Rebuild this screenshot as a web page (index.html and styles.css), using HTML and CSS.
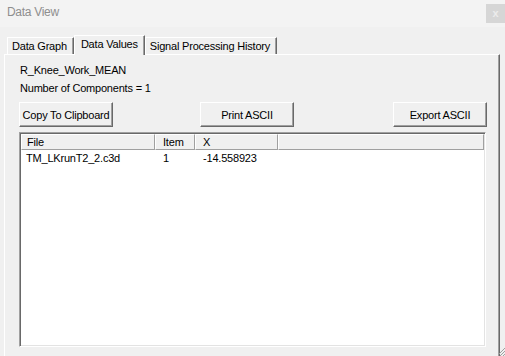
FILE: index.html
```html
<!DOCTYPE html>
<html lang="en">
<head>
  <meta charset="UTF-8" />
  <title>Data View</title>
  <link rel="stylesheet" href="styles.css">
</head>
<body>
  <div class="window">
    <div class="titlebar">
      <span class="title">Data View</span>
      <span class="close">x</span>
    </div>

    <div class="tabs">
      <div class="tab">Data Graph</div>
      <div class="tab active">Data Values</div>
      <div class="tab">Signal Processing History</div>
    </div>

    <div class="panel">
      <div class="label">R_Knee_Work_MEAN</div>
      <div class="label">Number of Components = 1</div>

      <div class="buttons">
        <button class="btn">Copy To Clipboard</button>
        <button class="btn btn-print">Print ASCII</button>
        <button class="btn btn-export">Export ASCII</button>
      </div>

      <div class="list">
        <div class="list-head">
          <div class="col">File</div>
          <div class="col">Item</div>
          <div class="col">X</div>
          <div class="col"></div>
        </div>
        <div class="list-row">
          <div class="cell">TM_LKrunT2_2.c3d</div>
          <div class="cell">1</div>
          <div class="cell">-14.558923</div>
          <div class="cell"></div>
        </div>
      </div>
    </div>

    <!-- uchwyt zmiany rozmiaru -->
    <svg class="grip" width="6" height="9" viewBox="0 0 6 9">
      <line x1="6" y1="1" x2="0" y2="7" stroke="#a0a0a0" />
      <line x1="6" y1="4" x2="1" y2="9" stroke="#a0a0a0" />
      <line x1="6" y1="7" x2="4" y2="9" stroke="#a0a0a0" />
    </svg>
  </div>
</body>
</html>
```

FILE: styles.css
```css
body {
  margin: 0;
  font-family: "Liberation Sans", Arial, sans-serif;
  font-size: 11px;
  letter-spacing: -0.2px;
  color: #000;
  background: #f0f0f0;
  overflow: hidden;
}
.window {
  position: relative;
  width: 505px;
  height: 356px;
  overflow: hidden;
  background: #f0f0f0;
}
.titlebar {
  height: 27px;
  display: flex;
  justify-content: space-between;
  align-items: flex-start;
  padding-left: 7px;
  background: #f3f3f3;
  box-sizing: border-box;
}
.title {
  font-size: 12px;
  letter-spacing: -0.3px;
  color: #8e8e8e;
  line-height: 24px;
}
.close {
  width: 19px;
  height: 19px;
  margin-top: 4px;
  background: #d6d6d6;
  color: #ececec;
  font-size: 11px;
  font-weight: bold;
  text-align: center;
  line-height: 18px;
}
.tabs {
  display: flex;
  align-items: flex-end;
  padding: 8px 0 0 7px;
  height: 27px;
  box-sizing: border-box;
}
.tab {
  height: 17px;
  line-height: 16px;
  padding: 0 6px 0 4px;
  border-top: 1px solid #fff;
  border-left: 1px solid #fff;
  border-right: 1px solid #696969;
  box-shadow: inset -1px 0 0 #a0a0a0;
  box-sizing: border-box;
  white-space: nowrap;
}
.tab.active {
  position: relative;
  z-index: 1;
  height: 20px;
  margin-bottom: -1px;
  padding: 0 6px 3px 6px;
  background: #f0f0f0;
}
.panel {
  margin: 0 5px 0 4px;
  height: 320px;
  padding: 6px 12px 0 14px;
  border-top: 1px solid #fff;
  border-left: 1px solid #fff;
  border-right: 1px solid #696969;
  box-shadow: inset -1px 0 0 #a0a0a0;
  box-sizing: border-box;
}
.label {
  line-height: 18px;
  padding-left: 1px;
}
.buttons {
  display: flex;
  margin-top: 5px;
}
.btn {
  width: 94px;
  height: 25px;
  padding: 0;
  font-family: inherit;
  font-size: 11px;
  letter-spacing: -0.2px;
  color: #000;
  background: #f0f0f0;
  border-top: 1px solid #fff;
  border-left: 1px solid #fff;
  border-right: 1px solid #696969;
  border-bottom: 1px solid #696969;
  box-shadow: inset -1px -1px 0 #a0a0a0;
  border-radius: 0;
}
.btn-print {
  margin-left: 87px;
}
.btn-export {
  margin-left: auto;
}
.list {
  margin: 5px 1px 0 0;
  height: 215px;
  background: #fff;
  border-top: 1px solid #a0a0a0;
  border-left: 1px solid #a0a0a0;
  border-right: 1px solid #fff;
  border-bottom: 1px solid #fff;
  box-shadow: inset 1px 1px 0 #696969, inset -1px -1px 0 #e3e3e3;
  padding: 1px 1px 0 1px;
  box-sizing: border-box;
}
.list-head,
.list-row {
  display: grid;
  grid-template-columns: 134px 40px 83px 1fr;
}
.col {
  height: 16px;
  line-height: 14px;
  padding-left: 7px;
  background: #f0f0f0;
  border-top: 1px solid #fff;
  border-left: 1px solid #fff;
  border-right: 1px solid #a0a0a0;
  border-bottom: 1px solid #a0a0a0;
  box-sizing: border-box;
}
.col:first-child {
  padding-left: 5px;
}
.cell {
  line-height: 16px;
  padding-left: 8px;
  white-space: nowrap;
}
.cell:first-child {
  padding-left: 5px;
}
.grip {
  position: absolute;
  right: 0;
  bottom: 0;
}
```
